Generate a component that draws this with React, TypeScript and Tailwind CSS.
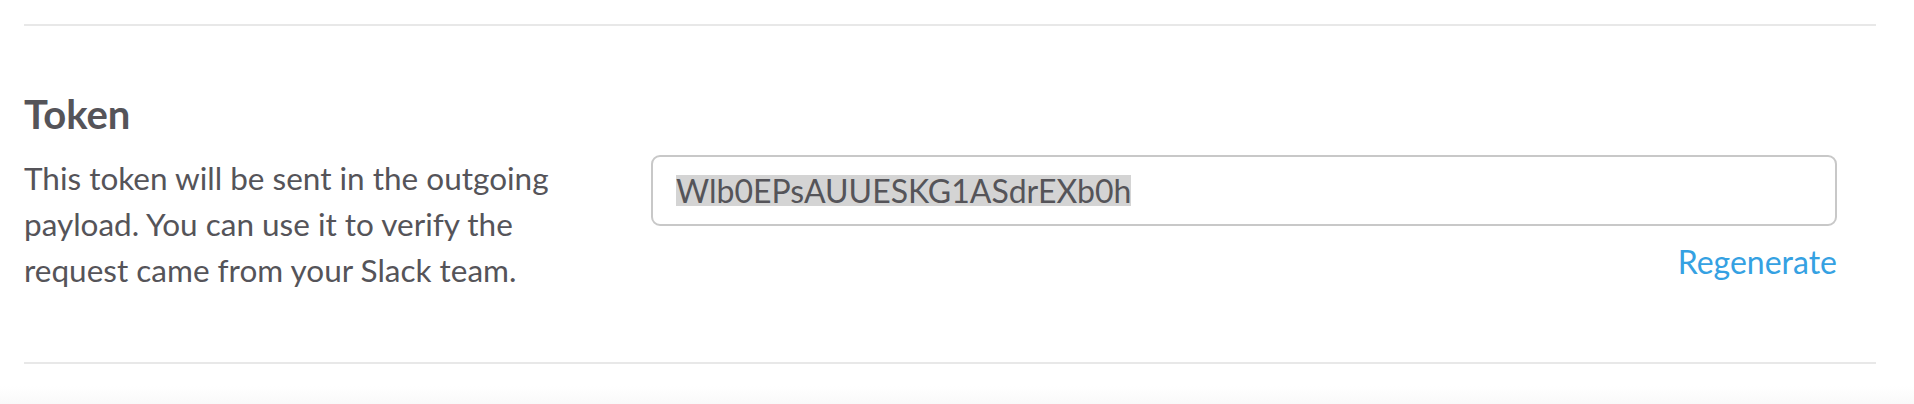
export default function App() {
  return (
    <div className="w-[1914px] h-[404px] bg-white font-['Lato','Liberation_Sans',sans-serif] text-[#555459] flex flex-col overflow-hidden">
      {/* Token setting row */}
      <div className="pt-[24px] pl-[24px] pr-[38px]">
        <div className="border-t-2 border-b-2 border-[#e8e8e8] h-[340px] flex items-start">
          <div className="w-[627px] shrink-0 pt-[66px]">
            <h4 className="text-[40px] leading-[45px] font-bold text-[#555459]">Token</h4>
            <p className="mt-[18px] text-[31.5px] leading-[46px] max-w-[560px]">
              This token will be sent in the outgoing payload. You can use it to verify the request came from your Slack team.
            </p>
          </div>
          <div className="flex-1 mr-[39px] pt-[129px] flex flex-col items-end">
            <div className="w-full h-[71px] border-2 border-[#c8c8c8] rounded-[9px] flex items-center pl-[23px]">
              <span className="inline-block h-[31px] leading-[31px] bg-[#d4d4d4] text-[32px] text-[#555459]">Wlb0EPsAUUESKG1ASdrEXb0h</span>
            </div>
            <a href="#" className="mt-[16px] text-[32px] leading-[39px] text-[#35a1e2]">
              Regenerate
            </a>
          </div>
        </div>
      </div>
      <div className="flex-1" />
      <div className="h-[18px] bg-linear-to-b from-white to-[#f9f9f9]" />
    </div>
  );
}
